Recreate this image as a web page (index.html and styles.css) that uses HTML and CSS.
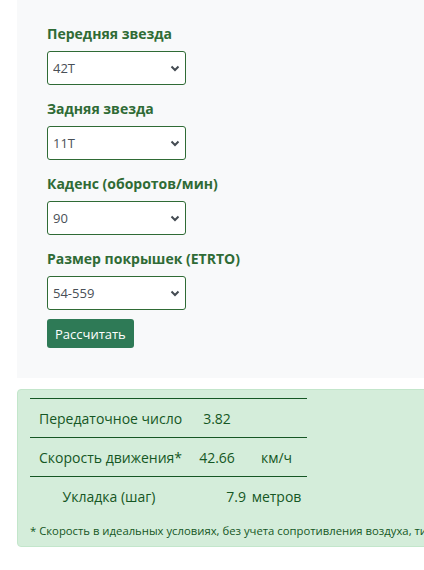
FILE: index.html
```html
<!DOCTYPE html>
<html lang="ru">
<head>
    <meta charset="UTF-8">
    <meta name="viewport" content="width=device-width, initial-scale=1.0">
    <title>Калькулятор передач</title>
    <link rel="stylesheet" href="styles.css">
</head>
<body>
    <div class="calc-form">
        <div class="form-group">
            <label for="front">Передняя звезда</label>
            <div class="select-wrap">
                <select id="front"><option>42T</option></select>
                <svg class="arrow" width="10" height="7" viewBox="0 0 10 7"><path d="M1.5 1.5 L5 5 L8.5 1.5" fill="none" stroke="#444b52" stroke-width="2"/></svg>
            </div>
        </div>
        <div class="form-group">
            <label for="rear">Задняя звезда</label>
            <div class="select-wrap">
                <select id="rear"><option>11T</option></select>
                <svg class="arrow" width="10" height="7" viewBox="0 0 10 7"><path d="M1.5 1.5 L5 5 L8.5 1.5" fill="none" stroke="#444b52" stroke-width="2"/></svg>
            </div>
        </div>
        <div class="form-group">
            <label for="cadence">Каденс (оборотов/мин)</label>
            <div class="select-wrap">
                <select id="cadence"><option>90</option></select>
                <svg class="arrow" width="10" height="7" viewBox="0 0 10 7"><path d="M1.5 1.5 L5 5 L8.5 1.5" fill="none" stroke="#444b52" stroke-width="2"/></svg>
            </div>
        </div>
        <div class="form-group">
            <label for="tire">Размер покрышек (ETRTO)</label>
            <div class="select-wrap">
                <select id="tire"><option>54-559</option></select>
                <svg class="arrow" width="10" height="7" viewBox="0 0 10 7"><path d="M1.5 1.5 L5 5 L8.5 1.5" fill="none" stroke="#444b52" stroke-width="2"/></svg>
            </div>
        </div>
        <button class="btn">Рассчитать</button>
    </div>

    <div class="result">
        <table class="result-table">
            <colgroup>
                <col class="c1"><col class="c2"><col class="c3">
            </colgroup>
            <tr>
                <td class="name">Передаточное число</td>
                <td class="num">3.82</td>
                <td></td>
            </tr>
            <tr>
                <td class="name">Скорость движения*</td>
                <td class="num">42.66</td>
                <td class="unit">км/ч</td>
            </tr>
            <tr>
                <td class="name center">Укладка (шаг)</td>
                <td class="num right">7.9</td>
                <td class="unit">метров</td>
            </tr>
        </table>
        <p class="note">* Скорость в идеальных условиях, без учета сопротивления воздуха, типа покрытия и т.д.</p>
    </div>
</body>
</html>
```

FILE: styles.css
```css
/* General */
body {
    margin: 0;
    padding: 0;
    font-family: "Open Sans", "Noto Sans", sans-serif;
    background: #fff;
    overflow: hidden;
    width: 424px;
}

/* Form panel */
.calc-form {
    margin-left: 17px;
    background: #f8f9fa;
    padding: 23px 30px 30px;
}

.form-group {
    margin-bottom: 13px;
}

.form-group label {
    display: block;
    font-size: 14px;
    font-weight: bold;
    color: #2f6b35;
    line-height: 22px;
    margin-bottom: 6px;
}

.select-wrap {
    position: relative;
    width: 139px;
}

.select-wrap select {
    appearance: none;
    -webkit-appearance: none;
    width: 139px;
    height: 34px;
    padding: 0 5px;
    font-family: inherit;
    font-size: 13px;
    color: #495057;
    background: #fff;
    border: 1px solid #2f6b35;
    border-radius: 3px;
    outline: none;
}

.select-wrap .arrow {
    position: absolute;
    right: 6px;
    top: 14px;
    pointer-events: none;
}

.btn {
    display: block;
    margin-top: -4px;
    padding: 0 8px;
    height: 29px;
    font-family: inherit;
    font-size: 13px;
    color: #fff;
    background: #2e7a56;
    border: none;
    border-radius: 3px;
    cursor: pointer;
}

/* Result box */
.result {
    margin: 11px 0 0 17px;
    width: 600px;
    background: #d4edda;
    border: 1px solid #c3e6cb;
    border-radius: 4px;
    padding: 8px 12px 8px;
    color: #155724;
}

.result-table {
    border-collapse: collapse;
    table-layout: fixed;
    width: 277px;
    font-size: 14px;
}

.result-table .c1 { width: 158px; }
.result-table .c2 { width: 58px; }
.result-table .c3 { width: 61px; }

.result-table td {
    border-top: 1px solid #155724;
    height: 38px;
    padding: 0;
    text-align: center;
    white-space: nowrap;
}

.result-table td.name {
    text-align: left;
    padding-left: 9px;
}

.result-table td.center {
    text-align: center;
    padding-left: 0;
}

.result-table td.right {
    text-align: right;
    padding-right: 0;
}

.note {
    margin: 8px 0 0;
    font-size: 11.3px;
    white-space: nowrap;
}
```
